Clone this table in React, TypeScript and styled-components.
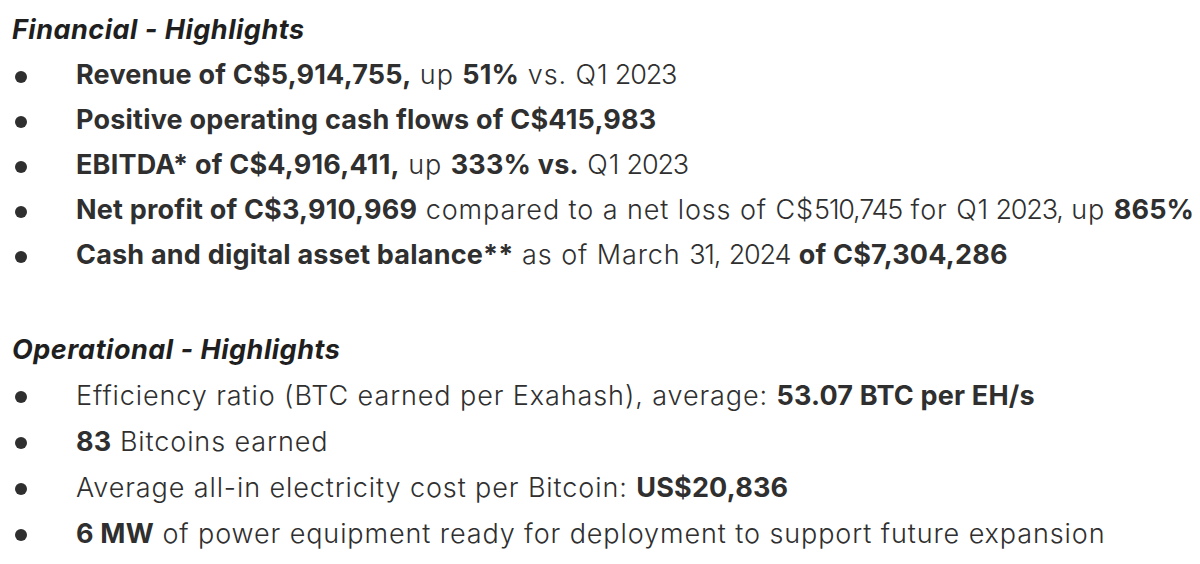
import React from "react";
import styled, { createGlobalStyle } from "styled-components";

const GlobalStyle = createGlobalStyle`
  html, body {
    margin: 0;
    padding: 0;
    background: #ffffff;
  }
  body {
    font-family: Inter, "Noto Sans", sans-serif;
    color: #2f2f2f;
  }
`;

type Row = { parts: { text: string; bold?: boolean }[] };

const financial: Row[] = [
  {
    parts: [
      { text: "Revenue of C$5,914,755,", bold: true },
      { text: " up " },
      { text: "51%", bold: true },
      { text: " vs. Q1 2023" },
    ],
  },
  { parts: [{ text: "Positive operating cash flows of C$415,983", bold: true }] },
  {
    parts: [
      { text: "EBITDA* of C$4,916,411,", bold: true },
      { text: " up " },
      { text: "333% vs.", bold: true },
      { text: " Q1 2023" },
    ],
  },
  {
    parts: [
      { text: "Net profit of C$3,910,969", bold: true },
      { text: " compared to a net loss of C$510,745 for Q1 2023, up " },
      { text: "865%", bold: true },
    ],
  },
  {
    parts: [
      { text: "Cash and digital asset balance**", bold: true },
      { text: " as of March 31, 2024 " },
      { text: "of C$7,304,286", bold: true },
    ],
  },
];

const operational: Row[] = [
  {
    parts: [
      { text: "Efficiency ratio (BTC earned per Exahash), average: " },
      { text: "53.07 BTC per EH/s", bold: true },
    ],
  },
  { parts: [{ text: "83", bold: true }, { text: " Bitcoins earned" }] },
  {
    parts: [
      { text: "Average all-in electricity cost per Bitcoin: " },
      { text: "US$20,836", bold: true },
    ],
  },
  {
    parts: [
      { text: "6 MW", bold: true },
      { text: " of power equipment ready for deployment to support future expansion" },
    ],
  },
];

// regular text: digit runs get tighter spacing, closer to the source typeface
function Plain({ text }: { text: string }) {
  return (
    <>
      {text.split(/(\d[\d,.]*)/).map((chunk, i) =>
        i % 2 ? <Figure key={i}>{chunk}</Figure> : <React.Fragment key={i}>{chunk}</React.Fragment>
      )}
    </>
  );
}

function Highlights({
  title,
  rows,
  spaced,
  rowHeight,
}: {
  title: string;
  rows: Row[];
  spaced?: boolean;
  rowHeight: number;
}) {
  return (
    <Section $spaced={spaced}>
      <Heading>{title}</Heading>
      <List>
        {rows.map((row, i) => (
          <Item key={i} $h={rowHeight}>
            <span>
              {row.parts.map((p, j) =>
                p.bold ? <Strong key={j}>{p.text}</Strong> : <Plain key={j} text={p.text} />
              )}
            </span>
          </Item>
        ))}
      </List>
    </Section>
  );
}

export default function App() {
  return (
    <>
      <GlobalStyle />
      <Page>
        <Highlights title="Financial - Highlights" rows={financial} rowHeight={45} />
        <Highlights title="Operational - Highlights" rows={operational} rowHeight={46} spaced />
      </Page>
    </>
  );
}

const Page = styled.div`
  width: 1200px;
  height: 564px;
  box-sizing: border-box;
  padding: 7px 0 0 12px;
  overflow: hidden;
  font-size: 27px;
  line-height: 45px;
  font-weight: 300;
  letter-spacing: 0.9px;
`;

const Section = styled.section<{ $spaced?: boolean }>`
  display: flex;
  flex-direction: column;
  margin-top: ${(p) => (p.$spaced ? "50px" : "0")};
`;

const Heading = styled.h2`
  margin: 0;
  font-size: 27px;
  font-weight: 700;
  font-style: italic;
  line-height: 45px;
  letter-spacing: 0.5px;
  color: #1f1f1f;
`;

const List = styled.ul`
  margin: 0;
  padding: 0;
  list-style: none;
`;

const Item = styled.li<{ $h: number }>`
  display: flex;
  align-items: center;
  white-space: nowrap;
  height: ${(p) => p.$h}px;

  &::before {
    content: "";
    flex: 0 0 12px;
    height: 12px;
    margin: 4px 49px 0 3px;
    border-radius: 50%;
    background: #2f2f2f;
  }
`;

const Strong = styled.b`
  font-weight: 700;
  letter-spacing: 0.2px;
`;

const Figure = styled.span`
  letter-spacing: -1.2px;
`;
